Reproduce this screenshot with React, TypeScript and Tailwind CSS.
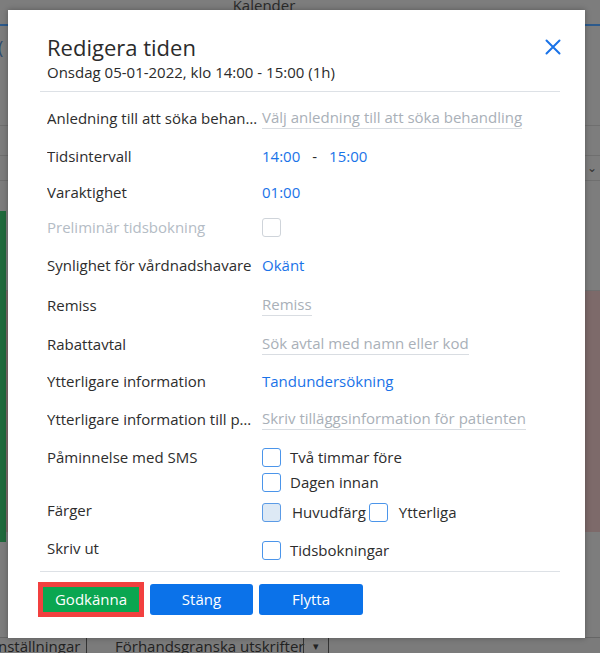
import React from "react";

const font = { fontFamily: '"Open Sans", "Noto Sans", sans-serif' };

function Check({ variant = "blue" }: { variant?: "blue" | "gray" | "filled" }) {
  const cls =
    variant === "gray"
      ? "border-[#cfd4da] bg-white"
      : variant === "filled"
      ? "border-[#5b9be6] bg-[#dde9f5]"
      : "border-[#4b95ea] bg-white";
  return <span className={`inline-block w-[19px] h-[19px] rounded-[3px] border-[1.5px] ${cls} shrink-0`} />;
}

function Row({ h, label, children, muted }: { h: string; label: string; children?: React.ReactNode; muted?: boolean }) {
  return (
    <div className={`flex items-center ${h}`}>
      <div className={`w-[215px] shrink-0 truncate pr-1 ${muted ? "text-[#b4bcc5]" : "text-[#2d2d2d]"}`}>{label}</div>
      <div className="flex-1 flex items-center">{children}</div>
    </div>
  );
}

function Placeholder({ text }: { text: string }) {
  return <span className="text-[#a9b0b8] border-b border-[#d9dde2] leading-[20px] pb-[1px]">{text}</span>;
}

export default function App() {
  return (
    <div className="relative w-[600px] h-[653px] overflow-hidden bg-[#7d7d7d]" style={font}>
      {/* background page (dimmed) */}
      <div className="flex flex-col h-full text-[#2a2a2a]">
        <div className="h-[24px] flex justify-center">
          <span className="text-[15px] leading-[12px] -mt-[1px] mr-[72px]">Kalender</span>
        </div>
        <div className="h-[2px] bg-[#2c5a8c]" />
        <div className="h-[100px] border-b border-[#6f6f6f] flex items-start pt-[8px]">
          <span className="text-[18px] text-[#2c4a6e] -ml-[2px]">(</span>
        </div>
        <div className="h-[30px] border-b border-[#6f6f6f]" />
        <div className="h-[25px] border-b border-[#6f6f6f] flex items-center justify-end pr-[3px]">
          <span className="text-[12px] text-[#333]">⌄</span>
        </div>
        <div className="flex-1 flex">
          <div className="w-[6px] bg-[#1f6a3c] mt-[30px] mb-[95px]" />
          <div className="flex-1 flex flex-col">
            <div className="h-[110px] border-b border-[#6f6f6f]" />
            <div className="flex-1 bg-[#7d6a6a] mb-[105px]" />
          </div>
        </div>
        <div className="h-[16px] flex items-center text-[15px] text-[#222] bg-[#7b7b7b] border-t border-[#666] whitespace-nowrap">
          <span className="w-[88px] -ml-[2px] leading-[16px]">nställningar</span>
          <span className="w-[1px] h-[16px] bg-[#333]" />
          <span className="w-[28px]" />
          <span className="w-[188px] leading-[16px]">Förhandsgranska utskrifter</span>
          <span className="w-[1px] h-[16px] bg-[#333]" />
          <span className="w-[24px] text-center text-[11px] leading-[16px]">▾</span>
          <span className="w-[1px] h-[16px] bg-[#333]" />
        </div>
      </div>

      {/* modal */}
      <div className="absolute left-[8px] top-[10px] w-[577px] h-[628px] bg-white shadow-[0_0_6px_rgba(0,0,0,0.3)] flex flex-col pl-[32px] pr-[25px]">
        <div className="flex items-start justify-between pt-[22px] pl-[7px]">
          <div>
            <div className="text-[22px] leading-[30px] text-[#2b2b2b]">Redigera tiden</div>
            <div className="text-[15px] leading-[20px] text-[#2b2b2b]">Onsdag 05-01-2022, klo 14:00 - 15:00 (1h)</div>
          </div>
          <svg width="18" height="18" viewBox="0 0 18 18" className="mt-[6px] mr-[-2px]">
            <path d="M2.5 2.5 L15.5 15.5 M15.5 2.5 L2.5 15.5" stroke="#1a73e8" strokeWidth="2" strokeLinecap="round" />
          </svg>
        </div>
        <div className="h-[1px] bg-[#dde1e6] mt-[9px]" />

        <div className="relative flex-1 min-h-0 overflow-hidden flex flex-col pl-[7px] text-[15px]">
          <div className="h-[6px] shrink-0" />
          <Row h="h-[40px] shrink-0" label="Anledning till att söka behandling">
            <Placeholder text="Välj anledning till att söka behandling" />
          </Row>
          <Row h="h-[37px] shrink-0" label="Tidsintervall">
            <span className="text-[#1a73e8]">14:00</span>
            <span className="text-[#2b2b2b] mx-[12px]">-</span>
            <span className="text-[#1a73e8]">15:00</span>
          </Row>
          <Row h="h-[35px] shrink-0" label="Varaktighet">
            <span className="text-[#1a73e8]">01:00</span>
          </Row>
          <Row h="h-[35px] shrink-0" label="Preliminär tidsbokning" muted>
            <Check variant="gray" />
          </Row>
          <Row h="h-[40px] shrink-0" label="Synlighet för vårdnadshavare">
            <span className="text-[#1a73e8]">Okänt</span>
          </Row>
          <Row h="h-[40px] shrink-0" label="Remiss">
            <Placeholder text="Remiss" />
          </Row>
          <Row h="h-[38px] shrink-0" label="Rabattavtal">
            <Placeholder text="Sök avtal med namn eller kod" />
          </Row>
          <Row h="h-[37px] shrink-0" label="Ytterligare information">
            <span className="text-[#1a73e8]">Tandundersökning</span>
          </Row>
          <Row h="h-[38px] shrink-0" label="Ytterligare information till patienten">
            <Placeholder text="Skriv tilläggsinformation för patienten" />
          </Row>
          <div className="flex pt-[7px] shrink-0">
            <div className="w-[215px] shrink-0 text-[#2d2d2d] leading-[24px]">Påminnelse med SMS</div>
            <div className="flex flex-col gap-[1px]">
              <div className="flex items-center gap-[9px] h-[24px]"><Check /><span className="text-[#2d2d2d]">Två timmar före</span></div>
              <div className="flex items-center gap-[9px] h-[24px]"><Check /><span className="text-[#2d2d2d]">Dagen innan</span></div>
            </div>
          </div>
          <div className="flex items-center h-[28px] mt-[4px] shrink-0">
            <div className="w-[215px] shrink-0 text-[#2d2d2d] -mt-[4px]">Färger</div>
            <div className="flex items-center">
              <Check variant="filled" />
              <span className="text-[#2d2d2d] ml-[11px]">Huvudfärg</span>
              <span className="ml-[3px]" />
              <Check />
              <span className="text-[#2d2d2d] ml-[11px]">Ytterliga</span>
            </div>
          </div>
          <div className="flex items-center h-[40px] mt-[4px] shrink-0">
            <div className="w-[215px] shrink-0 text-[#2d2d2d] -mt-[4px]">Skriv ut</div>
            <div className="flex items-center gap-[9px]"><Check /><span className="text-[#2d2d2d]">Tidsbokningar</span></div>
          </div>

          {/* scrollbar */}
          <div className="absolute right-[-8px] top-[12px] w-[6px] h-[455px] rounded-full bg-[#d3d9df]">
            <div className="absolute left-0 right-0 bottom-0 h-[277px] rounded-full bg-[#0b6fe6]" />
          </div>
        </div>

        <div className="h-[1px] bg-[#dde1e6] shrink-0" />
        <div className="flex items-center gap-[6px] pt-[10px] pb-[21px] -ml-[2px] text-[15px] text-white shrink-0">
          <div className="w-[106px] h-[35px] border-[5px] border-[#f2403f] bg-[#0aa650] flex items-center justify-center">Godkänna</div>
          <div className="w-[103px] h-[31px] rounded-[3px] bg-[#0b72e9] flex items-center justify-center">Stäng</div>
          <div className="w-[104px] h-[31px] rounded-[3px] bg-[#0b72e9] flex items-center justify-center">Flytta</div>
        </div>
      </div>
    </div>
  );
}
